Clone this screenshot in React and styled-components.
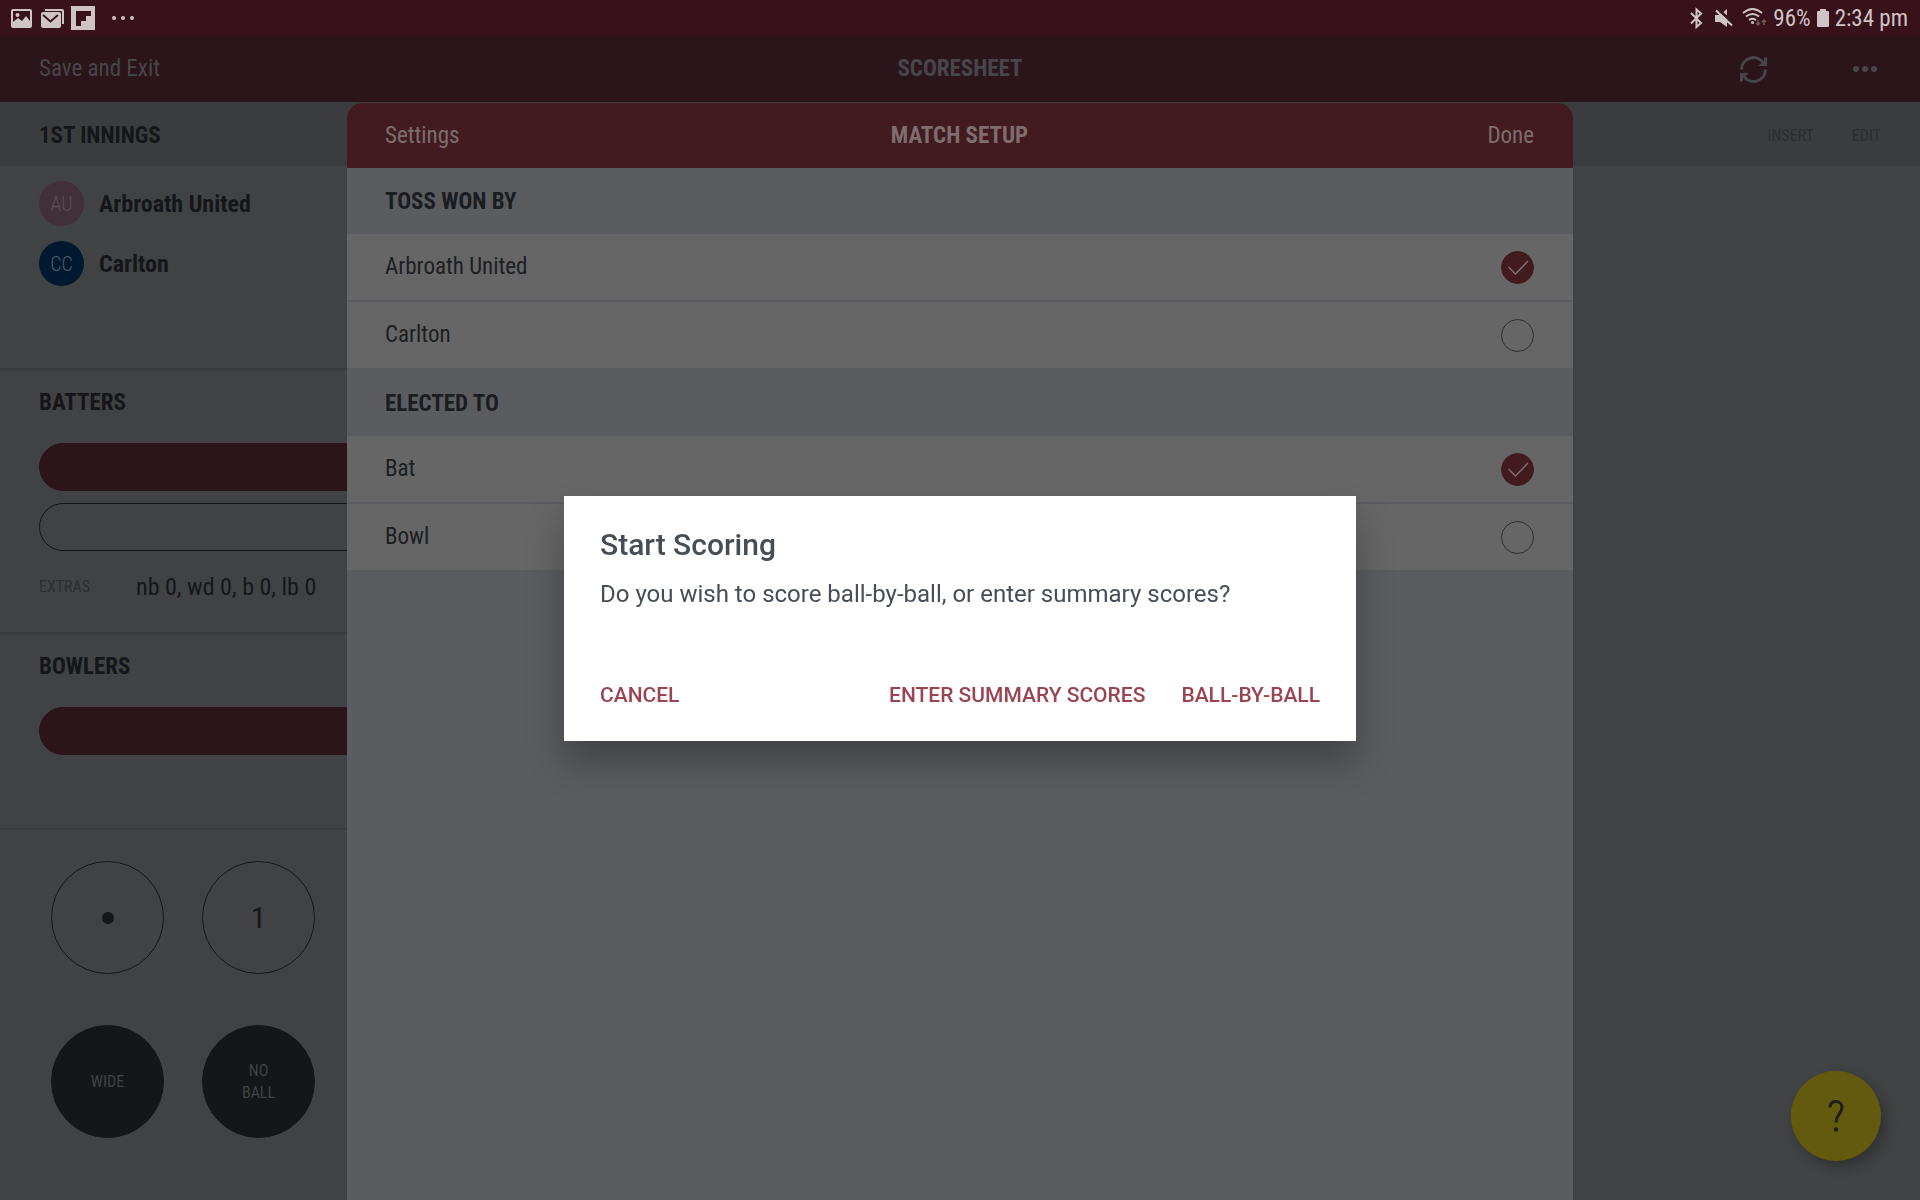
import { useState } from 'react'
import styled, { createGlobalStyle } from 'styled-components'

const condensada = `'Roboto Condensed', 'Liberation Sans Narrow', Roboto, sans-serif`

const GlobalStyle = createGlobalStyle`
    * {
        box-sizing: border-box;
    }
    body {
        margin: 0;
        background: #414243;
        color: #15161a;
        font-family: ${condensada};
        font-size: 23px;
        font-weight: 400;
        line-height: 32px;
    }
    button {
        border: 0;
        padding: 0;
        background: none;
        color: inherit;
        font: inherit;
        cursor: pointer;
    }
    h1, h2, h3, p, ul, fieldset {
        margin: 0;
        padding: 0;
        border: 0;
    }
    h1, h2, h3 {
        font-size: 23px;
        font-weight: bold;
        line-height: 32px;
    }
    svg {
        display: block;
    }
`
const Page = styled.div`
    display: flex;
    flex-direction: column;
    min-height: 100vh;
`
const StatusBar = styled.div`
    display: flex;
    justify-content: space-between;
    align-items: center;
    height: 36px;
    padding: 0 12px 0 11px;
    background: #38121a;
    color: #cfc3c5;
`
const StatusGroup = styled.div`
    display: flex;
    align-items: center;
    gap: 6px;
`
const StatusText = styled.span`
    padding-top: 2px;
`
const AppBar = styled.header`
    display: grid;
    grid-template-columns: 1fr auto 1fr;
    align-items: center;
    height: 66px;
    padding: 0 39px;
    background: #2b151a;
    color: #47464a;
`
const BarButton = styled.button`
    justify-self: start;
`
const BarActions = styled.div`
    display: flex;
    justify-content: flex-end;
    align-items: center;
    gap: 86px;
`
const Body = styled.main`
    position: relative;
    display: flex;
    flex: 1;
    flex-direction: column;
`
const InningsBar = styled.div`
    display: flex;
    justify-content: space-between;
    align-items: center;
    height: 64px;
    padding: 3px 39px 0;
    background: #3b3c40;
`
const EditActions = styled.div`
    display: flex;
    gap: 38px;
    color: #2d2e32;
    font-size: 16px;
`
const Sidebar = styled.aside`
    width: 33%;
`
const Section = styled.section`
    min-height: ${props => props.$height};
    padding: ${props => props.$padding};
    border-bottom: 2px solid #3b3c40;
`
const TeamList = styled.ul`
    display: flex;
    flex-direction: column;
    gap: 15px;
    list-style: none;
`
const Team = styled.li`
    display: flex;
    align-items: center;
    gap: 15px;
    font-size: 24px;
    font-weight: bold;
`
const Avatar = styled.span`
    display: grid;
    place-items: center;
    width: 45px;
    height: 45px;
    border-radius: 50%;
    background: ${props => props.$color};
    color: ${props => props.$text};
    font-size: 20px;
    font-weight: 300;
`
const Player = styled.button`
    display: block;
    width: 100%;
    height: 48px;
    margin-top: ${props => props.$first ? '24px' : '12px'};
    border: 1px solid ${props => props.$first ? '#2b151a' : '#15161a'};
    border-radius: 24px;
    background: ${props => props.$first ? '#2b151a' : 'transparent'};
`
const Extras = styled.div`
    display: flex;
    align-items: center;
    margin-top: 20px;
    font-size: 24px;
`
const ExtrasLabel = styled.span`
    min-width: 97px;
    color: #2d2e32;
    font-size: 16px;
`
const Keypad = styled.div`
    display: flex;
    flex-wrap: wrap;
    gap: 51px 38px;
    width: 366px;
    padding: 31px 51px;
`
const Key = styled.button`
    display: grid;
    place-items: center;
    width: 113px;
    height: 113px;
    border: 1px solid #15161a;
    border-radius: 50%;
    background: ${props => props.$dark ? '#15161a' : 'transparent'};
    color: ${props => props.$dark ? '#414243' : '#15161a'};
    font-size: ${props => props.$dark ? '16px' : '30px'};
    line-height: 22px;
    white-space: pre-line;
`
const Dot = styled.span`
    width: 12px;
    height: 12px;
    border-radius: 50%;
    background: #15161a;
`
const SetupLayer = styled.div`
    position: absolute;
    inset: 1px 0 0;
    display: flex;
    justify-content: center;
`
const Setup = styled.div`
    width: 100%;
    max-width: 1226px;
    border-radius: 15px 15px 0 0;
    background: #5b5c60;
    overflow: hidden;
`
const SetupHeader = styled.header`
    display: grid;
    grid-template-columns: 1fr auto 1fr;
    align-items: center;
    height: 65px;
    padding: 0 39px 0 38px;
    background: #421b21;
    color: #7d6d6f;

    button:last-child {
        justify-self: end;
    }
`
const Group = styled.fieldset`
    min-width: 0;
`
const Legend = styled.legend`
    display: flex;
    align-items: center;
    width: 100%;
    height: 66px;
    padding: 2px 38px 0;
    color: #1a1d21;
    font-weight: bold;
`
const Option = styled.label`
    display: flex;
    justify-content: space-between;
    align-items: center;
    height: 68px;
    padding: 0 39px 0 38px;
    border-bottom: 2px solid #5b5c60;
    background: #666;
    color: #1c1e22;
`
const RadioBox = styled.span`
    display: grid;

    > * {
        grid-area: 1 / 1;
    }
    svg {
        pointer-events: none;
    }
`
const Radio = styled.input`
    appearance: none;
    width: 33px;
    height: 33px;
    margin: 0;
    border: 1px solid #2d2e32;
    border-radius: 50%;

    &:checked {
        border-color: #421b21;
        background: #421b21;
    }
`
const Help = styled.button`
    position: fixed;
    right: 39px;
    bottom: 39px;
    && {
        width: 90px;
        height: 90px;
        border-radius: 50%;
        background: #63590f;
        box-shadow: 5px 6px 12px rgba(0, 0, 0, .25);
    }
    svg {
        margin: 0 auto;
    }
`
const DialogLayer = styled.div`
    position: fixed;
    inset: 36px 0 0;
    display: grid;
    place-items: center;
`
const Dialog = styled.div`
    width: 792px;
    max-width: 90%;
    padding: 30px 36px;
    background: #fff;
    box-shadow: 0 22px 34px rgba(0, 0, 0, .28);
    color: #474d56;
    font-family: Roboto, sans-serif;
`
const DialogTitle = styled.h2`
    font-size: 30px;
    font-weight: 500;
    line-height: 38px;
`
const DialogText = styled.p`
    margin-top: 14px;
    font-size: 24px;
`
const DialogActions = styled.div`
    display: flex;
    gap: 36px;
    margin-top: 69px;
    color: #9c4352;
    font-size: 21px;
    font-weight: 500;

    button:first-child {
        margin-right: auto;
    }
`

function StatusIcons() {
    return (
        <svg width="124" height="24" viewBox="11 6 124 24" fill="#cfc3c5">
            <path fillRule="evenodd" d="M13 9h17a2 2 0 0 1 2 2v15a2 2 0 0 1-2 2H13a2 2 0 0 1-2-2V11a2 2 0 0 1 2-2zM13 11v11l5-4 4 3 4-5 4 5V11z" />
            <circle cx="17.500" cy="15" r="2" />
            <path d="M45 9h17a2 2 0 0 1 2 2v13h-2V12a1 1 0 0 0-1-1H45z" />
            <rect x="41" y="12" width="20" height="16" rx="2" />
            <path d="M43 15l7.500 6.500L58 15" fill="none" stroke="#38121a" strokeWidth="1.800" />
            <path fillRule="evenodd" d="M71 6h24v24H71zM76 11v15h5v-5h5v-5h5v-5z" />
            <circle cx="114" cy="18" r="2" />
            <circle cx="123" cy="18" r="2" />
            <circle cx="132" cy="18" r="2" />
        </svg>
    )
}

function SignalIcons() {
    return (
        <svg width="77" height="24" viewBox="1694 6 77 24" fill="none" stroke="#cfc3c5" strokeWidth="2">
            <path d="M1695 13l10 10-4.500 4V9.500l4.500 4-10 10" />
            <path d="M1719 15h5l7-6v18l-7-5h-5z" fill="#cfc3c5" stroke="none" />
            <path d="M1721.500 8.500l17 16" stroke="#38121a" strokeWidth="3" />
            <path d="M1720 10.500l16 15" strokeWidth="2.200" />
            <path d="M1747 13q9.500-8 19 0M1750 16.500q6.500-5 13 0M1753 20q3.500-2.500 7 0" />
            <circle cx="1756.500" cy="22.500" r="1.500" fill="#cfc3c5" stroke="none" />
            <path d="M1762 20v5m-2-2l2 2 2-2M1768 25v-5m-2 2l2-2 2 2" stroke="#75595e" strokeWidth="1.500" />
        </svg>
    )
}

function SyncIcon() {
    return (
        <svg width="27" height="27" viewBox="0 0 27 27" fill="none" stroke="#47464a" strokeWidth="3">
            <path d="M1.500 13.500A12 12 0 0 1 23.500 7M25.500 13.500A12 12 0 0 1 3.500 20" />
            <path d="M27 1v9h-9l3-2.500 3-1V2zM0 26v-9h9l-3 2.500-3 1V25z" fill="#47464a" stroke="none" />
        </svg>
    )
}

function MoreIcon() {
    return (
        <svg width="28" height="8" viewBox="0 0 28 8" fill="#47464a">
            <circle cx="3" cy="4" r="3" />
            <circle cx="12" cy="4" r="3" />
            <circle cx="21" cy="4" r="3" />
        </svg>
    )
}

function Choices({ title, name, options }) {
    const [selected, setSelected] = useState(options[0])

    return (
        <Group>
            <Legend>{title}</Legend>
            {options.map(option => (
                <Option key={option}>
                    {option}
                    <RadioBox>
                        <Radio
                            type="radio"
                            name={name}
                            checked={selected === option}
                            onChange={() => setSelected(option)}
                        />
                        {selected === option &&
                            <svg width="33" height="33" viewBox="0 0 33 33" fill="none" stroke="#806d70" strokeWidth="1.500">
                                <path d="M7.500 16l7 7L27 10" />
                            </svg>
                        }
                    </RadioBox>
                </Option>
            ))}
        </Group>
    )
}

function App() {
    return (
        <Page>
            <GlobalStyle />
            <StatusBar>
                <StatusIcons />
                <StatusGroup>
                    <SignalIcons />
                    <StatusText>96%</StatusText>
                    <svg width="12" height="18" viewBox="0 0 12 18" fill="#cfc3c5">
                        <path d="M3 0h6v2h2a1 1 0 0 1 1 1v14a1 1 0 0 1-1 1H1a1 1 0 0 1-1-1V3a1 1 0 0 1 1-1h2z" />
                    </svg>
                    <StatusText>2:34 pm</StatusText>
                </StatusGroup>
            </StatusBar>
            <AppBar>
                <BarButton>Save and Exit</BarButton>
                <h1>SCORESHEET</h1>
                <BarActions>
                    <button aria-label="Refresh"><SyncIcon /></button>
                    <button aria-label="More"><MoreIcon /></button>
                </BarActions>
            </AppBar>
            <Body>
                <InningsBar>
                    <h2>1ST INNINGS</h2>
                    <EditActions>
                        <button>INSERT</button>
                        <button>EDIT</button>
                    </EditActions>
                </InningsBar>
                <Sidebar>
                    <Section $height="204px" $padding="15px 39px">
                        <TeamList>
                            <Team><Avatar $color="#412f39" $text="#59505a">AU</Avatar>Arbroath United</Team>
                            <Team><Avatar $color="#011930" $text="#4b5a68">CC</Avatar>Carlton</Team>
                        </TeamList>
                    </Section>
                    <Section $height="264px" $padding="17px 39px">
                        <h3>BATTERS</h3>
                        <Player $first aria-label="Batter 1" />
                        <Player aria-label="Batter 2" />
                        <Extras>
                            <ExtrasLabel>EXTRAS</ExtrasLabel>
                            <span>nb 0, wd 0, b 0, lb 0</span>
                        </Extras>
                    </Section>
                    <Section $height="196px" $padding="17px 39px">
                        <h3>BOWLERS</h3>
                        <Player $first aria-label="Bowler" />
                    </Section>
                    <Keypad>
                        <Key aria-label="Dot ball"><Dot /></Key>
                        <Key>1</Key>
                        <Key $dark>WIDE</Key>
                        <Key $dark>{'NO\nBALL'}</Key>
                    </Keypad>
                </Sidebar>
                <SetupLayer>
                    <Setup>
                        <SetupHeader>
                            <BarButton>Settings</BarButton>
                            <h2>MATCH SETUP</h2>
                            <button>Done</button>
                        </SetupHeader>
                        <Choices title="TOSS WON BY" name="toss" options={['Arbroath United', 'Carlton']} />
                        <Choices title="ELECTED TO" name="elected" options={['Bat', 'Bowl']} />
                    </Setup>
                </SetupLayer>
            </Body>
            <Help aria-label="Help">
                <svg width="16" height="34" viewBox="0 0 16 34" fill="none" stroke="#1f2016" strokeWidth="3">
                    <path d="M2 8.500C2 4.500 4.500 2.500 8 2.500s6 2.500 6 6c0 6-6 7-6 15" />
                    <circle cx="8" cy="30.500" r="2.200" fill="#1f2016" stroke="none" />
                </svg>
            </Help>
            <DialogLayer>
                <Dialog role="alertdialog" aria-labelledby="dialog-title">
                    <DialogTitle id="dialog-title">Start Scoring</DialogTitle>
                    <DialogText>Do you wish to score ball-by-ball, or enter summary scores?</DialogText>
                    <DialogActions>
                        <button>CANCEL</button>
                        <button>ENTER SUMMARY SCORES</button>
                        <button>BALL-BY-BALL</button>
                    </DialogActions>
                </Dialog>
            </DialogLayer>
        </Page>
    )
}

export default App
